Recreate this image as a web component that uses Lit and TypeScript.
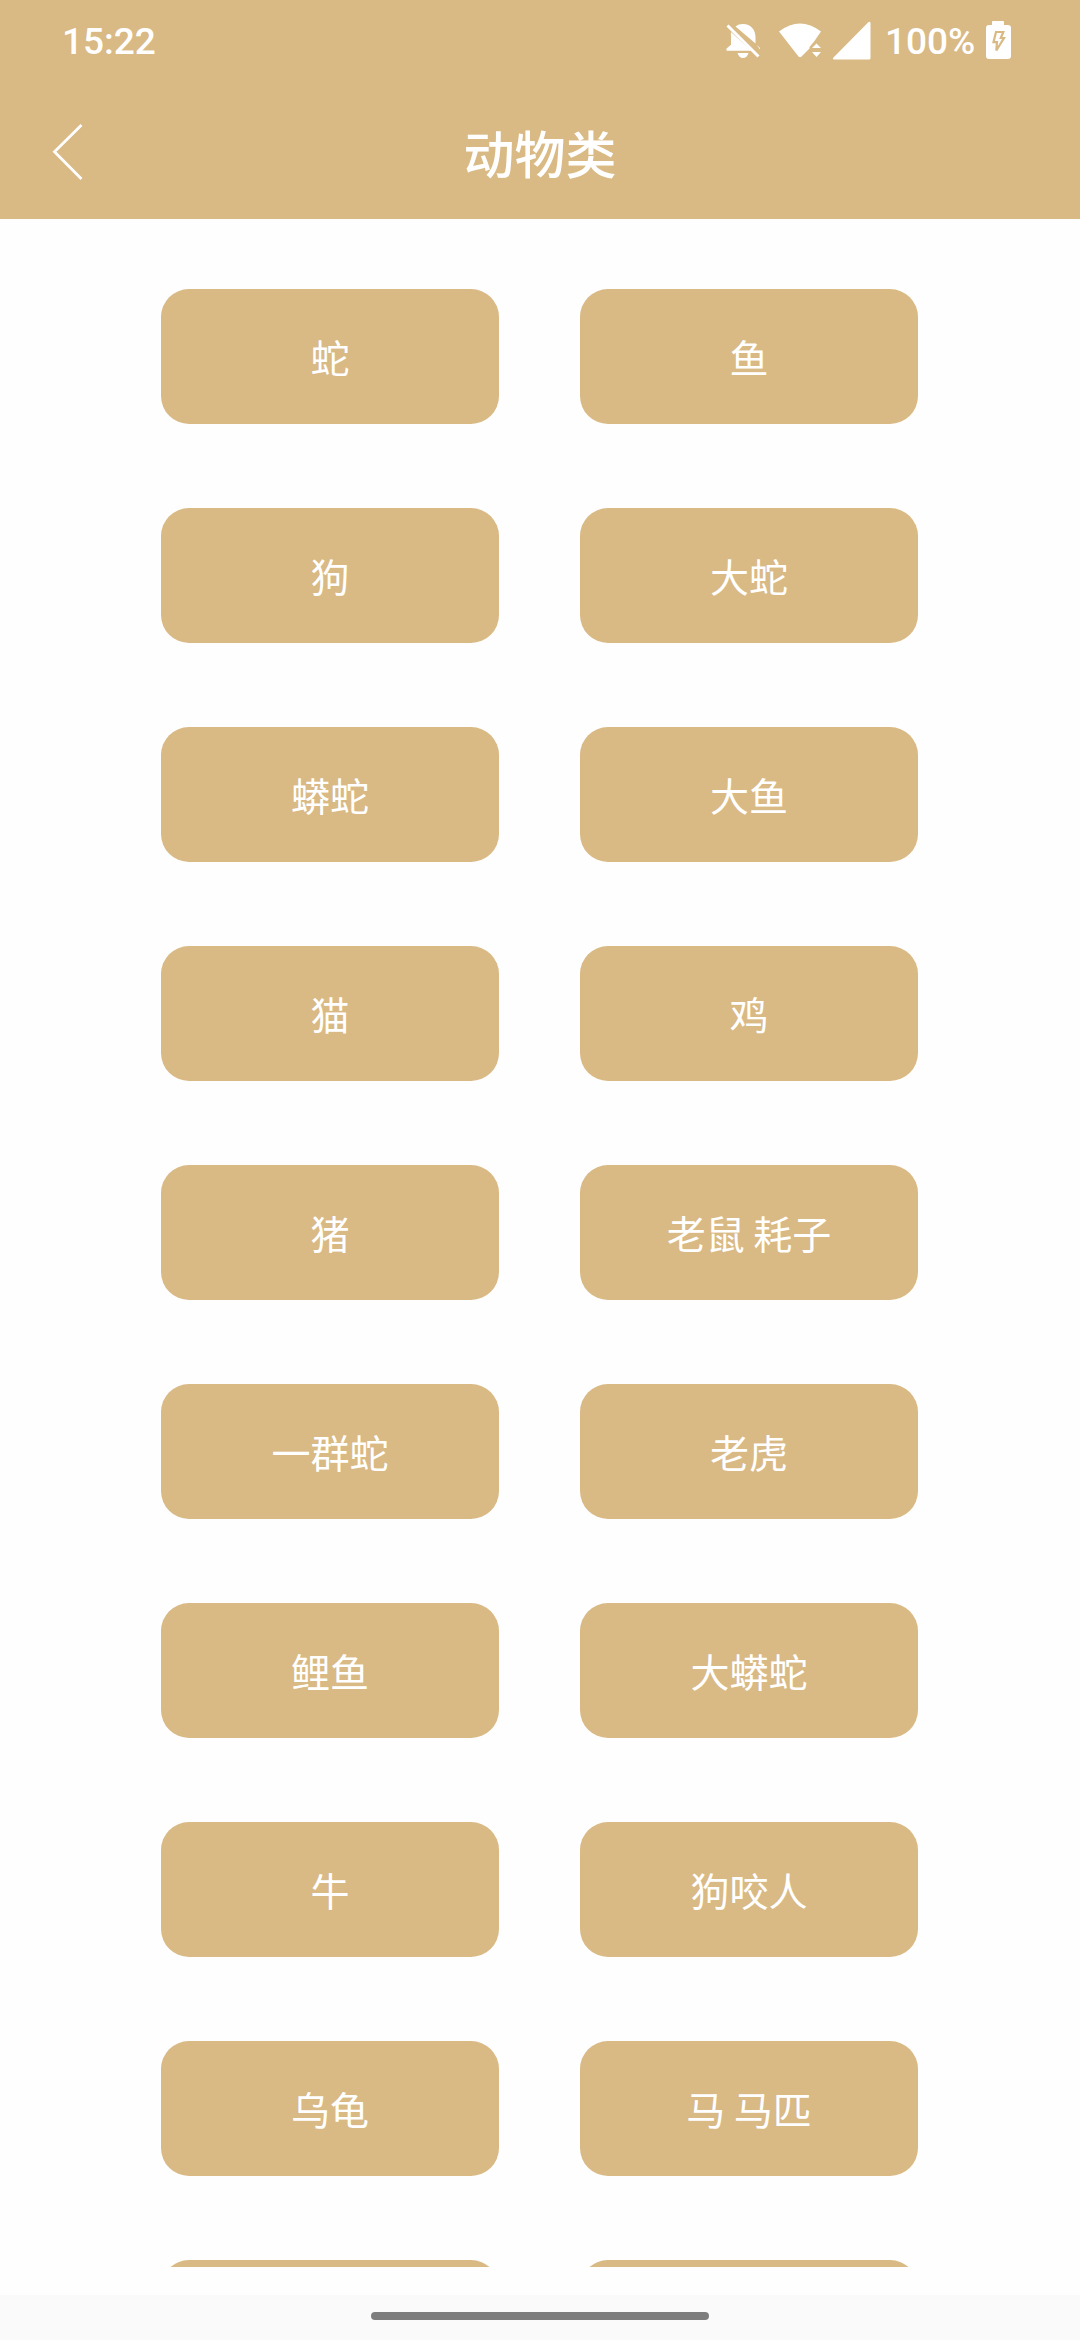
import { LitElement, html, css } from "lit";
import { customElement, property } from "lit/decorators.js";

const ANIMALS = [
  "蛇", "鱼", "狗", "大蛇", "蟒蛇", "大鱼", "猫", "鸡", "猪", "老鼠 耗子",
  "一群蛇", "老虎", "鲤鱼", "大蟒蛇", "牛", "狗咬人", "乌龟", "马 马匹", "", "",
];

@customElement("status-bar")
class StatusBar extends LitElement {
  static styles = css`
    :host {
      display: flex;
      justify-content: space-between;
      height: 84px;
      padding: 0 67px 0 62px;
      color: #fff;
      font: 500 37px/84px Roboto, sans-serif;
    }
    .icons { display: flex; }
    svg { display: block; height: 84px; fill: #fff; }
    .percent { box-sizing: border-box; width: 93px; padding-left: 1px; }
  `;
  render() {
    return html`
      <span class="time">15:22</span>
      <div class="icons">
        <svg width="164" height="84" viewBox="720 0 164 84">
          <path d="M735.500 26.500C737.500 24.800 740 24 743 24C751 24 755.500 30 755.500 37V43.500ZM731 32L751.500 50.800H726.500V48.500L731 44.800V37Q730.500 34 731 32ZM756.500 44.500L760 48V49.500ZM737.500 53H748.500Q747 58 743 58Q739 58 737.500 53Z"/>
          <path d="M727.500 25.500L758.500 56.500" stroke="#fff" stroke-width="3" fill="none"/>
          <path d="M779 31.500Q800 15.500 821 31.500L814.500 41L809.500 47V48.500L801.500 56.500Q800 58 798.500 56.500Z"/>
          <path d="M812 48L816.500 43.500L821 48ZM812 52H821L816.500 57Z"/>
          <path d="M870.500 23V58Q870.500 59.500 869 59.500H834Q832 59 833.500 57.500L868 22.500Q870 21 870.500 23Z"/>
        </svg>
        <span class="percent">100%</span>
        <svg width="36" height="84" viewBox="977 0 36 84">
          <path d="M993 21H1003Q1004 21 1004 22V25H1008Q1011 25 1011 28V56Q1011 59 1008 59H989Q986 59 986 56V28Q986 25 989 25H992V22Q992 21 993 21Z"/>
          <path d="M996 32L1003.300 32L1000.800 38L1004 38L996.300 50.500L997 42.200L993.500 42.200Z" stroke="#d9b984" stroke-width="2.200"/>
        </svg>
      </div>
    `;
  }
}

@customElement("title-bar")
class TitleBar extends LitElement {
  @property() heading = "";
  static styles = css`
    :host {
      display: grid;
      grid-template-columns: 135px 1fr 135px;
      height: 135px;
      color: #fff;
    }
    .back { display: block; }
    .heading {
      margin: 0;
      text-align: center;
      font: 500 51px/137px "Noto Sans CJK SC", sans-serif;
    }
  `;
  render() {
    return html`
      <svg class="back" width="135" height="135" viewBox="0 84 135 135">
        <path d="M81.500 125L54.500 151.800L81.500 179" fill="none" stroke="#fff" stroke-width="2.800"/>
      </svg>
      <h1 class="heading">${this.heading}</h1>
    `;
  }
}

@customElement("app-root")
class AppRoot extends LitElement {
  static styles = css`
    :host {
      display: flex;
      flex-direction: column;
      width: 1080px;
      height: 2340px;
      overflow: hidden;
      background: #fefefe;
    }
    .top { flex: none; height: 219px; background: #d9b984; }
    .list {
      flex: none;
      box-sizing: border-box;
      height: 2048px;
      padding: 70px 162px 0 161px;
      overflow: hidden;
      display: grid;
      grid-template-columns: 338px 338px;
      grid-auto-rows: 135px;
      gap: 84px 81px;
    }
    .item {
      padding: 0;
      border: 0;
      border-radius: 28px;
      background: #d9b984;
      color: #fff;
      text-align: center;
      font: 400 39px/135px "Noto Sans CJK SC", sans-serif;
    }
    .nav {
      display: flex;
      justify-content: center;
      flex: none;
      box-sizing: border-box;
      height: 45px;
      margin-top: 28px;
      padding-top: 17px;
      background: #fafafa;
    }
    .handle { width: 338px; height: 8px; border-radius: 4px; background: #7d7d7d; }
  `;
  render() {
    return html`
      <header class="top">
        <status-bar></status-bar>
        <title-bar heading="动物类"></title-bar>
      </header>
      <main class="list">
        ${ANIMALS.map((name) => html`<button class="item">${name}</button>`)}
      </main>
      <footer class="nav"><div class="handle"></div></footer>
    `;
  }
}
